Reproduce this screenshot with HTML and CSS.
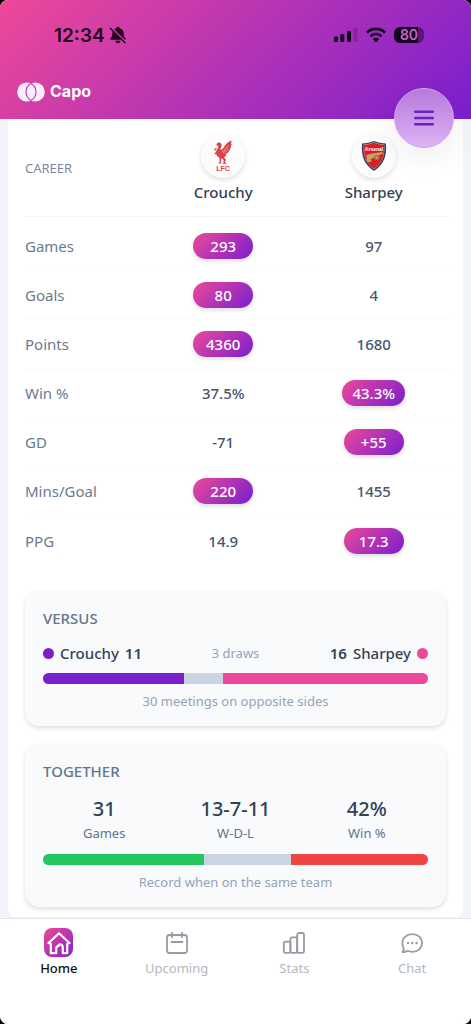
FILE: index.html
```html
<!DOCTYPE html>
<html lang="en">
<head>
    <meta charset="UTF-8">
    <meta name="viewport" content="width=device-width, initial-scale=1">
    <title>Capo</title>
    <link rel="stylesheet" href="styles.css">
</head>
<body>

<div class="app">
    <header class="header">
        <!-- Status bar -->
        <div class="status">
            <div class="status-left">
                <span>12:34</span>
                <svg width="18" height="18" viewBox="0 0 18 18" aria-hidden="true">
                    <path d="M9 .8c.9 0 1.600.6 1.700 1.400 2.500.7 3.900 2.600 4 5.100.1 2.900.7 4 1.900 5.200.4.500.2 1.300-.5 1.300H1.900c-.7 0-.9-.8-.5-1.300C2.600 11.300 3.200 10.200 3.300 7.300c.1-2.500 1.500-4.400 4-5.100C7.400 1.400 8.100.8 9 .8z" fill="#22051c"/>
                    <path d="M6.400 14.700h5.200c-.2 1.600-1.200 2.500-2.600 2.500s-2.400-.9-2.600-2.500z" fill="#22051c"/>
                    <path d="M2.200 1.700l14.600 14.600" stroke="#c73ba5" stroke-width="2"/>
                    <path d="M1.200 2.200l14.800 14.600" stroke="#22051c" stroke-width="1.300" stroke-linecap="round"/>
                </svg>
            </div>
            <div class="status-right">
                <svg width="24" height="16" viewBox="0 0 24 16" aria-hidden="true">
                    <rect x="0" y="9.500" width="4" height="5.500" rx="1.200" fill="#14031c"/>
                    <rect x="6.300" y="7" width="4" height="8" rx="1.200" fill="#14031c"/>
                    <rect x="13" y="4" width="4" height="11" rx="1.200" fill="#14031c"/>
                    <rect x="19.500" y="1" width="4" height="14" rx="1.200" fill="#14031c" opacity=".2"/>
                </svg>
                <svg width="20" height="16" viewBox="0 0 20 16" fill="none" stroke="#14031c" stroke-width="2.600" aria-hidden="true">
                    <path d="M1 5.600a12.800 12.800 0 0 1 18 0"/>
                    <path d="M4.400 9.300a8 8 0 0 1 11.200 0"/>
                    <path d="M10 15.500l-3.200-3.400a4.600 4.600 0 0 1 6.400 0z" fill="#14031c" stroke="none"/>
                </svg>
                <span class="battery">80</span>
            </div>
        </div>

        <!-- Logo -->
        <a class="brand" href="#">
            <svg width="28" height="20" viewBox="0 0 28 20" aria-hidden="true">
                <circle cx="9.800" cy="10" r="9.600" fill="#fbeefa"/>
                <circle cx="18.200" cy="10" r="9.600" fill="#fbeefa"/>
                <path d="M14 1.600a9.600 9.600 0 0 1 0 16.800a9.600 9.600 0 0 1 0-16.800z" fill="#f7eefb" stroke="#b63caf" stroke-width="1.100"/>
            </svg>
            Capo
        </a>

        <button class="menu-button" type="button" aria-label="Menu">
            <svg width="20" height="16" viewBox="0 0 20 16" stroke="#6d22bb" stroke-width="2.400" stroke-linecap="round" aria-hidden="true">
                <path d="M1.200 1.800h17.600M1.200 8h17.600M1.200 14.200h17.600"/>
            </svg>
        </button>
    </header>

    <main class="main">
        <div class="panel">
            <!-- Career comparison -->
            <table class="career">
                <thead>
                    <tr>
                        <th class="career-title" scope="col">CAREER</th>
                        <th scope="col">
                            <div class="player">
                                <span class="crest">
                                    <svg width="22" height="32" viewBox="0 0 22 32" aria-hidden="true">
                                        <g fill="#d9434c">
                                            <path d="M4.500 5.500C4.300 3.400 5.600 2.400 7.300 2.600c1.900.2 2.700 1.700 2.300 3.400-.3 1.500-1.500 2.600-1.300 3.700 1.400-.1 2.500-.8 3.500-2.200C13.300 5.200 15 2.200 19.400.6c.2 1.500-.1 2.500-.8 3.300.7 0 .8 0 1.100-.1-.1 1.300-.6 2.100-1.300 2.700l.9.100c-.3 1.200-.9 1.800-1.600 2.300l.8.200c-.5 1.200-1.200 1.700-2 2.100l.6.300c-.8 1.200-1.700 1.700-2.900 1.800.2 1.900-.6 3.300-2.200 4.100l1.900 2.200c-.3 1.100-.6 2-.6 3l1.600 1.100H11.100l.7-3.600-2.300-1.900-.6 2.600.5 2.700H6.200l1.400-1.300-.1-4.400C5.300 16.600 3.800 14.800 4 12.200c.1-1.600 1.300-2.700 1.900-4.100.4-1 .6-2-.1-2.700z"/>
                                            <path d="M2.600 8.600l2.300-.7-.9 2.200-1.700.7zM2.400 13.100l1.900-.9.300 1.600-1.900.6z"/>
                                        </g>
                                        <path d="M10 11.500c2.200-.5 3.600-2.600 6.700-6M11.200 12.600c2-.6 3-1.900 5-3.800" fill="none" stroke="#f7c9cb" stroke-width=".7"/>
                                        <text class="crest-lfc" x="11" y="31" text-anchor="middle">LFC</text>
                                    </svg>
                                </span>
                                Crouchy
                            </div>
                        </th>
                        <th scope="col">
                            <div class="player">
                                <span class="crest">
                                    <svg width="26" height="32" viewBox="0 0 26 32" aria-hidden="true">
                                        <path d="M1 3.600C5 3.300 9 2.500 13 1c4 1.500 8 2.300 12 2.600.8 11.500-1.200 20.400-12 27.400C2.200 24 .2 15.100 1 3.600z" fill="#39405f"/>
                                        <path d="M2.600 4.500C6.300 4.200 9.700 3.500 13 2.300c3.300 1.200 6.700 1.900 10.400 2.200.4 10.500-1.300 18.300-10.400 24.700C3.900 22.800 2.200 15 2.600 4.500z" fill="#d9a9a0"/>
                                        <path d="M3 4.900C6.600 4.600 9.900 3.800 13 2.700c3.100 1.100 6.400 1.900 10 2.200.3 10.400-1.400 17.900-10 23.900C4.400 22.800 2.700 15.300 3 4.900z" fill="#d81f26"/>
                                        <path d="M5 15.800l3.200-1.700 9.700-1.500 3.600-.5.2 2-4.200 1.200 1.400 1.800-1.500 2.600-2.800.5-1.700-2.100-3.700 1.300 2 2-4.200.9-2-2.300 1.100-2z" fill="#c9a067"/>
                                        <circle cx="15.600" cy="17.600" r="2" fill="none" stroke="#8c3a26" stroke-width=".8"/>
                                        <text class="crest-arsenal" x="13" y="11" text-anchor="middle">Arsenal</text>
                                    </svg>
                                </span>
                                Sharpey
                            </div>
                        </th>
                    </tr>
                </thead>
                <tbody>
                    <tr>
                        <th scope="row">Games</th>
                        <td><span class="best">293</span></td>
                        <td>97</td>
                    </tr>
                    <tr>
                        <th scope="row">Goals</th>
                        <td><span class="best">80</span></td>
                        <td>4</td>
                    </tr>
                    <tr>
                        <th scope="row">Points</th>
                        <td><span class="best">4360</span></td>
                        <td>1680</td>
                    </tr>
                    <tr>
                        <th scope="row">Win %</th>
                        <td>37.5%</td>
                        <td><span class="best">43.3%</span></td>
                    </tr>
                    <tr>
                        <th scope="row">GD</th>
                        <td>-71</td>
                        <td><span class="best">+55</span></td>
                    </tr>
                    <tr>
                        <th scope="row">Mins/Goal</th>
                        <td><span class="best">220</span></td>
                        <td>1455</td>
                    </tr>
                    <tr>
                        <th scope="row">PPG</th>
                        <td>14.9</td>
                        <td><span class="best">17.3</span></td>
                    </tr>
                </tbody>
            </table>

            <!-- Versus -->
            <section class="card">
                <h2>VERSUS</h2>
                <div class="versus">
                    <div class="side">
                        <span class="dot purple"></span>
                        <span>Crouchy</span>
                        <b>11</b>
                    </div>
                    <span class="draws">3 draws</span>
                    <div class="side side-right">
                        <b>16</b>
                        <span>Sharpey</span>
                        <span class="dot pink"></span>
                    </div>
                </div>
                <div class="bar">
                    <span class="purple" style="flex-grow: 11"></span>
                    <span class="grey" style="flex-grow: 3"></span>
                    <span class="pink" style="flex-grow: 16"></span>
                </div>
                <p class="caption">30 meetings on opposite sides</p>
            </section>

            <!-- Together -->
            <section class="card">
                <h2>TOGETHER</h2>
                <div class="totals">
                    <div class="total"><strong>31</strong><span>Games</span></div>
                    <div class="total"><strong>13-7-11</strong><span>W-D-L</span></div>
                    <div class="total"><strong>42%</strong><span>Win %</span></div>
                </div>
                <div class="bar">
                    <span class="green" style="flex-grow: 13"></span>
                    <span class="grey" style="flex-grow: 7"></span>
                    <span class="red" style="flex-grow: 11"></span>
                </div>
                <p class="caption">Record when on the same team</p>
            </section>
        </div>
    </main>

    <!-- Bottom navigation -->
    <nav class="tabs">
        <a class="tab active" href="#">
            <span class="tab-icon">
                <svg width="24" height="24" viewBox="0 0 24 24" fill="none" stroke="#fff" stroke-width="2.200" stroke-linejoin="round" stroke-linecap="round" aria-hidden="true">
                    <path d="M1.500 12L12 2.200 22.500 12l-2.300.7v9.500h-4.400v-5.400c0-2-1.300-3.500-2.900-3.500-1 0-1.300.9-1.300 1.700-1.500.1-2.400.9-2.400 2.400v4.800H3.800v-9.500z"/>
                </svg>
            </span>
            Home
        </a>
        <a class="tab" href="#">
            <span class="tab-icon">
                <svg width="24" height="24" viewBox="0 0 24 24" fill="none" stroke="#979ba3" stroke-width="1.800" stroke-linecap="round" aria-hidden="true">
                    <rect x="2" y="4" width="20" height="18" rx="2.500"/>
                    <path d="M7 1.800v4.400M17 1.800v4.400M6.500 11h11"/>
                </svg>
            </span>
            Upcoming
        </a>
        <a class="tab" href="#">
            <span class="tab-icon">
                <svg width="24" height="24" viewBox="0 0 24 24" fill="none" stroke="#979ba3" stroke-width="1.800" stroke-linejoin="round" aria-hidden="true">
                    <rect x="1.800" y="10.600" width="6.600" height="11.200" rx="1.800"/>
                    <rect x="8.400" y="6.400" width="6.800" height="15.400" rx="1.800"/>
                    <rect x="15.200" y="2" width="6.800" height="19.800" rx="1.800"/>
                </svg>
            </span>
            Stats
        </a>
        <a class="tab" href="#">
            <span class="tab-icon">
                <svg width="24" height="24" viewBox="0 0 24 24" fill="none" stroke="#979ba3" stroke-width="1.800" stroke-linejoin="round" aria-hidden="true">
                    <path d="M12.300 3.200c5.600 0 9.700 3.700 9.700 8.800s-4.100 8.800-9.700 8.800c-1.700 0-3.200-.3-4.600-1-1.200.9-3 1.400-5.200 1.200 1.200-1.200 1.500-2.600 1.200-3.900-.9-1.400-1.300-3.100-1.300-5.100 0-5.100 4.300-8.800 9.900-8.800z"/>
                    <g fill="#979ba3" stroke="none">
                        <circle cx="8" cy="12" r="1.200"/>
                        <circle cx="12.300" cy="12" r="1.200"/>
                        <circle cx="16.600" cy="12" r="1.200"/>
                    </g>
                </svg>
            </span>
            Chat
        </a>
    </nav>
</div>

</body>
</html>
```

FILE: styles.css
```css
* {
    box-sizing: border-box;
}

html {
    background-color: #000;
}

body {
    margin: 0;
    font-family: "Noto Sans", sans-serif;
    font-size: 15px;
    color: #334155;
}

a {
    text-decoration: none;
}

.app {
    display: flex;
    flex-direction: column;
    min-height: 100vh;
    background-color: #f1f5f9;
    border-radius: 8px;
    overflow: hidden;
}

/* Header */
.header {
    position: relative;
    padding: 22px 17px 17px;
    background: linear-gradient(135deg, #ee4899, #7a1fcf);
}

.status {
    display: flex;
    justify-content: space-between;
    align-items: center;
    height: 26px;
    padding: 0 30px 0 37px;
    font-family: Inter, sans-serif;
    color: #22051c;
}

.status-left {
    display: flex;
    align-items: center;
    gap: 4px;
    font-size: 19px;
    font-weight: 600;
}

.status-right {
    display: flex;
    align-items: center;
    gap: 8px;
}

.battery {
    width: 30px;
    border-radius: 6px;
    background: linear-gradient(90deg, #14031c 80%, #561878 80%);
    color: #c465c8;
    font-size: 14px;
    font-weight: 600;
    line-height: 16px;
    text-align: center;
}

.brand {
    display: flex;
    align-items: center;
    gap: 5px;
    width: max-content;
    margin-top: 33px;
    color: #fff;
    font-family: Inter, sans-serif;
    font-size: 16px;
    font-weight: 700;
    line-height: 21px;
}

.menu-button {
    position: absolute;
    right: 17px;
    bottom: -29px;
    display: flex;
    align-items: center;
    justify-content: center;
    width: 60px;
    height: 60px;
    padding: 0;
    border: 1px solid #d2a4ec;
    border-radius: 50%;
    background: linear-gradient(180deg, #b878dc, #dcb4f4);
    box-shadow: 0 8px 32px rgba(0, 0, 0, 0.08);
    cursor: pointer;
}

/* Content */
.main {
    flex: 1;
    padding: 0 8px;
}

.panel {
    height: 100%;
    padding: 0 17px 10px;
    border-radius: 0 0 8px 8px;
    background-color: #fff;
}

.career {
    width: calc(100% + 3px);
    table-layout: fixed;
    border-collapse: separate;
    border-spacing: 0;
    margin-bottom: 26px;
    text-align: center;
}

.career th,
.career td {
    padding: 0;
}

.career thead th {
    height: 98px;
    border-bottom: 1px solid #f1f3f6;
}

.career .career-title {
    width: 29%;
    color: #7c899c;
    font-size: 13px;
    font-weight: 400;
    text-align: left;
}

.player {
    display: flex;
    flex-direction: column;
    align-items: center;
    gap: 3px;
    padding-top: 2px;
    font-weight: 500;
    line-height: 22px;
}

.crest {
    display: flex;
    align-items: center;
    justify-content: center;
    width: 44px;
    height: 44px;
    border-radius: 50%;
    background-color: #fcfcfd;
    box-shadow: 0 2px 5px rgba(15, 23, 42, 0.14);
}

.crest-lfc {
    fill: #d9434c;
    font-family: "Liberation Sans", sans-serif;
    font-size: 7px;
    font-weight: 700;
}

.crest-arsenal {
    fill: #fff;
    font-family: "Liberation Sans", sans-serif;
    font-size: 5px;
    font-weight: 700;
}

.career tbody th,
.career tbody td {
    height: 49px;
    border-bottom: 1px solid #f8fafc;
}

.career tbody tr:first-child th,
.career tbody tr:first-child td {
    height: 54px;
    padding-top: 5px;
}

.career tbody tr:last-child th,
.career tbody tr:last-child td {
    border-bottom: none;
}

.career tbody th {
    color: #6b7a90;
    font-weight: 400;
    text-align: left;
}

.career tbody td {
    color: #475569;
    font-weight: 500;
}

.career .best {
    display: inline-block;
    min-width: 60px;
    padding: 0 10px;
    border-radius: 13px;
    background: linear-gradient(135deg, #ec4899, #7a1fcf);
    box-shadow: 0 2px 4px rgba(15, 23, 42, 0.16);
    color: #fff;
    font-weight: 500;
    line-height: 26px;
}

/* Cards */
.card {
    padding: 16px 18px;
    border-radius: 14px;
    background-color: #f8fafc;
    box-shadow: 0 2px 4px rgba(15, 23, 42, 0.14);
}

.card + .card {
    margin-top: 18px;
}

.card h2 {
    margin: 0 0 12px;
    color: #64748b;
    font-size: 15px;
    font-weight: 500;
    line-height: 22px;
}

.versus {
    display: flex;
    align-items: center;
    margin-bottom: 8px;
    font-weight: 500;
    line-height: 24px;
}

.side {
    display: flex;
    flex: 1;
    align-items: center;
    gap: 6px;
}

.side b {
    font-weight: 600;
}

.side-right {
    justify-content: flex-end;
}

.draws {
    color: #94a3b8;
    font-size: 13px;
    font-weight: 400;
}

.dot {
    width: 11px;
    height: 11px;
    border-radius: 50%;
}

.bar {
    display: flex;
    height: 11px;
    border-radius: 6px;
    overflow: hidden;
}

.purple {
    background-color: #7a1fc9;
}

.pink {
    background-color: #ec4899;
}

.grey {
    background-color: #cbd5e1;
}

.green {
    background-color: #22c55e;
}

.red {
    background-color: #ef4444;
}

.caption {
    margin: 8px 0 0;
    color: #94a3b8;
    font-size: 13px;
    line-height: 18px;
    text-align: center;
}

.totals {
    display: grid;
    grid-template-columns: repeat(3, 1fr);
    gap: 9px;
    margin-bottom: 12px;
}

.total {
    display: flex;
    flex-direction: column;
    align-items: center;
    color: #64748b;
    font-size: 13px;
    line-height: 18px;
}

.total strong {
    color: #334155;
    font-size: 20px;
    font-weight: 500;
    line-height: 30px;
}

/* Bottom navigation */
.tabs {
    display: flex;
    height: 106px;
    padding-top: 9px;
    border-top: 1px solid #e2e5ea;
    background-color: #fff;
}

.tab {
    display: flex;
    flex: 1;
    flex-direction: column;
    align-items: center;
    gap: 2px;
    color: #b4b8c0;
    font-size: 13px;
    line-height: 18px;
}

.tab-icon {
    display: flex;
    align-items: center;
    justify-content: center;
    width: 29px;
    height: 29px;
    border-radius: 8px;
}

.tab.active {
    color: #111;
    font-weight: 500;
}

.tab.active .tab-icon {
    background: linear-gradient(135deg, #ec4899, #8a22c8);
}
```
